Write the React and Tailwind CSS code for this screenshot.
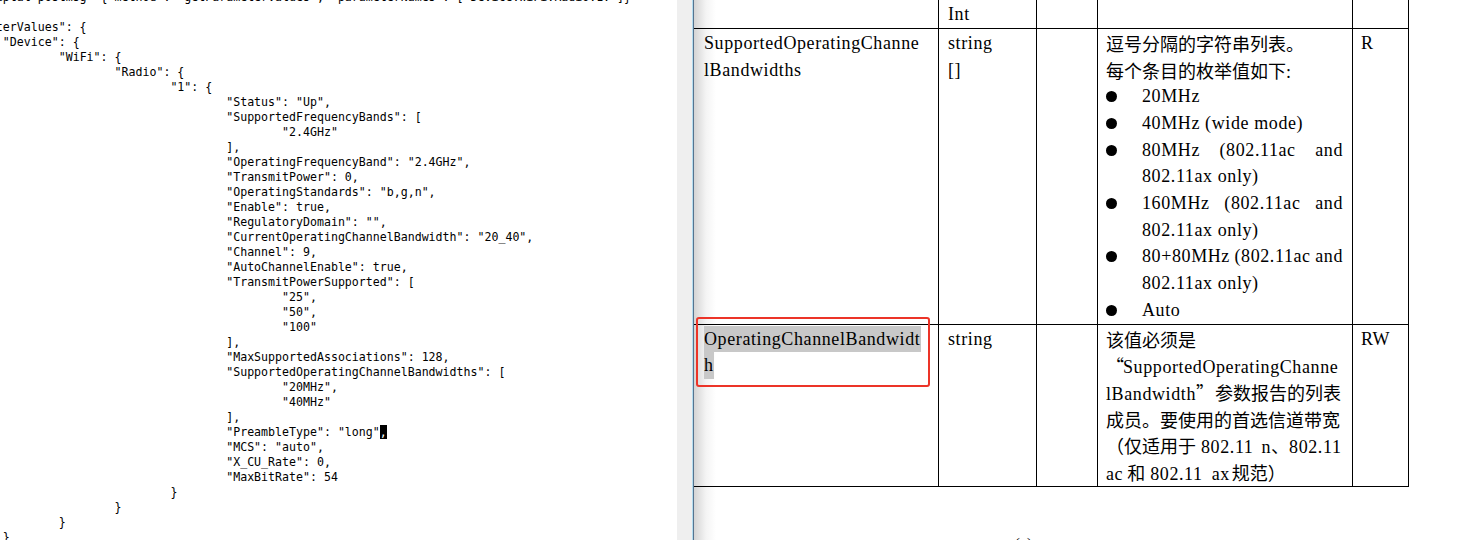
import React from 'react'

const CODE = [
  [0, `cwmpscriptal postmsg '{"method": "getParameterValues", "parameterNames": ["Device.WiFi.Radio.1."]}'`],
  [0, '{'],
  [0, '"parameterValues": {'],
  [8, '"Device": {'],
  [16, '"WiFi": {'],
  [24, '"Radio": {'],
  [32, '"1": {'],
  [40, '"Status": "Up",'],
  [40, '"SupportedFrequencyBands": ['],
  [48, '"2.4GHz"'],
  [40, '],'],
  [40, '"OperatingFrequencyBand": "2.4GHz",'],
  [40, '"TransmitPower": 0,'],
  [40, '"OperatingStandards": "b,g,n",'],
  [40, '"Enable": true,'],
  [40, '"RegulatoryDomain": "",'],
  [40, '"CurrentOperatingChannelBandwidth": "20_40",'],
  [40, '"Channel": 9,'],
  [40, '"AutoChannelEnable": true,'],
  [40, '"TransmitPowerSupported": ['],
  [48, '"25",'],
  [48, '"50",'],
  [48, '"100"'],
  [40, '],'],
  [40, '"MaxSupportedAssociations": 128,'],
  [40, '"SupportedOperatingChannelBandwidths": ['],
  [48, '"20MHz",'],
  [48, '"40MHz"'],
  [40, '],'],
  [40, 'CURSOR'],
  [40, '"MCS": "auto",'],
  [40, '"X_CU_Rate": 0,'],
  [40, '"MaxBitRate": 54'],
  [32, '}'],
  [24, '}'],
  [16, '}'],
  [8, '}'],
]

const CodePane = () => (
  <div className="w-[677px] shrink-0 overflow-hidden bg-white">
    <div className="-ml-[53px] -mt-[10px] font-['DejaVu_Sans_Mono',monospace] text-[11.6px] leading-[15px] text-black">
      {CODE.map(([ind, text], i) => (
        <div key={i} className="h-[15px] whitespace-pre">
          {' '.repeat(ind)}
          {text === 'CURSOR' ? (
            <>
              "PreambleType": "long"<span className="bg-black text-white">,</span>
            </>
          ) : (
            text
          )}
        </div>
      ))}
    </div>
  </div>
)

// chinese run, bigger than the latin text
const Z = ({ children, className = '' }) => (
  <span className={`font-['Noto_Sans_CJK_SC',sans-serif] text-[18px] tracking-normal ${className}`}>{children}</span>
)

const Line = ({ children, className = '' }) => (
  <div className={`h-[26.7px] leading-[26.7px] whitespace-nowrap ${className}`}>{children}</div>
)

const Bullet = ({ children }) => (
  <div className="flex">
    <div className="w-[36px] shrink-0 h-[26.7px] flex items-center">
      <span className="block w-[11px] h-[11px] rounded-full bg-black" />
    </div>
    <div className="flex-1">{children}</div>
  </div>
)

const Spread = ({ words }) => (
  <div className="h-[26.7px] leading-[26.7px] flex justify-between whitespace-nowrap">
    {words.map((w) => (
      <span key={w}>{w}</span>
    ))}
  </div>
)

const Row = ({ cells }) => (
  <div className="flex border-b border-black">
    <div className="w-[245px] shrink-0 border-r border-black pl-[10px] pt-px">{cells[0]}</div>
    <div className="w-[98px] shrink-0 border-r border-black pl-[9px] pt-px">{cells[1]}</div>
    <div className="w-[61px] shrink-0 border-r border-black pl-[8px] pt-px">{cells[2]}</div>
    <div className="w-[255px] shrink-0 border-r border-black pl-[8px] pr-[9px] pt-px">{cells[3]}</div>
    <div className="w-[56px] shrink-0 border-r border-black pl-[8px] pt-px">{cells[4]}</div>
  </div>
)

const DocPane = () => (
  <div className="relative flex-1 overflow-hidden bg-[linear-gradient(to_right,#d4d4d4,#f4f4f4_12px,#ffffff_22px)]">
    <div className="-mt-[27.4px] w-[715px] border-t border-black font-['Liberation_Serif','Noto_Sans_CJK_SC',serif] text-[18px] tracking-[0.6px] text-black">
      <Row
        cells={[
          null,
          <>
            <Line>unsigned</Line>
            <Line>Int</Line>
          </>,
          null,
          null,
          null,
        ]}
      />
      <Row
        cells={[
          <>
            <Line>SupportedOperatingChanne</Line>
            <Line>lBandwidths</Line>
          </>,
          <>
            <Line>string</Line>
            <Line>[]</Line>
          </>,
          null,
          <>
            <Line>
              <Z>逗号分隔的字符串列表。</Z>
            </Line>
            <Line>
              <Z>每个条目的枚举值如下</Z>:
            </Line>
            <Bullet>
              <Line>20MHz</Line>
            </Bullet>
            <Bullet>
              <Line>40MHz (wide mode)</Line>
            </Bullet>
            <Bullet>
              <Spread words={['80MHz', '(802.11ac', 'and']} />
              <Line>802.11ax only)</Line>
            </Bullet>
            <Bullet>
              <Spread words={['160MHz', '(802.11ac', 'and']} />
              <Line>802.11ax only)</Line>
            </Bullet>
            <Bullet>
              <Spread words={['80+80MHz', '(802.11ac', 'and']} />
              <Line>802.11ax only)</Line>
            </Bullet>
            <Bullet>
              <Line>Auto</Line>
            </Bullet>
          </>,
          <Line>R</Line>,
        ]}
      />
      <Row
        cells={[
          <>
            <Line>
              <span className="inline-block w-[217px] bg-[#c8c8c8]">OperatingChannelBandwidt</span>
            </Line>
            <Line>
              <span className="inline-block w-[10px] bg-[#c8c8c8]">h</span>
            </Line>
          </>,
          <Line>string</Line>,
          null,
          <>
            <Line>
              <Z>该值必须是</Z>
            </Line>
            <Line>
              <Z className="inline-block w-[17px] text-right">“</Z>SupportedOperatingChanne
            </Line>
            <Line>
              lBandwidth<Z className="inline-block w-[19px]">”</Z>
              <Z>参数报告的列表</Z>
            </Line>
            <Line>
              <Z>成员。要使用的首选信道带宽</Z>
            </Line>
            <Line>
              <Z>（仅适用于</Z>
              <span className="ml-[5px]">802.11</span>
              <span className="ml-[8px]">n</span>
              <Z>、</Z>802.11
            </Line>
            <Line>
              ac<Z className="ml-[4px]">和</Z>
              <span className="ml-[5px]">802.11</span>
              <span className="ml-[9px]">ax</span>
              <Z className="ml-[2px]">规范）</Z>
            </Line>
          </>,
          <Line>RW</Line>,
        ]}
      />
    </div>
    <div className="pl-[321px] pt-[47px] font-['Liberation_Serif',serif] text-[15px] leading-[18px] text-black">(a)</div>

    {/* red annotation box */}
    <div className="absolute left-[2px] top-[317px] w-[234px] h-[70px] rounded-[3px] border-[2.5px] border-[#ec3428]" />
  </div>
)

export default function App() {
  return (
    <div className="flex h-[540px] w-full overflow-hidden bg-white">
      <CodePane />
      <div className="w-[15px] shrink-0 bg-[#efefef]" />
      <div className="w-px shrink-0 bg-[#b3dcef]" />
      <div className="w-px shrink-0 bg-[#56738e]" />
      <DocPane />
    </div>
  )
}
